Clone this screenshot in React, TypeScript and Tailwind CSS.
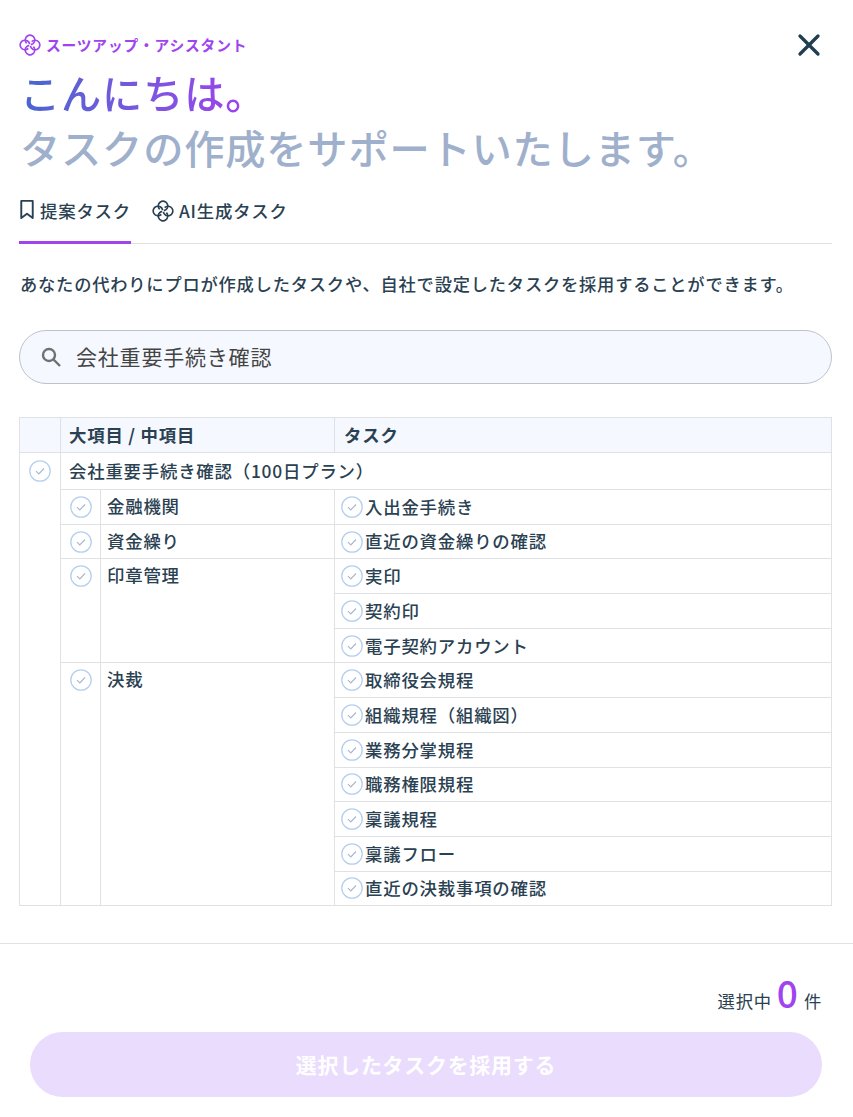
import React from "react";
import { X } from "lucide-react";

const Logo = ({ className }: { className: string }) => (
  <svg viewBox="0 0 24 24" fill="none" stroke="currentColor" strokeWidth="1.8" className={className}>
    {[0, 90, 180, 270].map((deg) => (
      <path key={deg} d="M8.32 10.18A5.2 5.2 0 1 1 12.9 11.62" transform={`rotate(${deg} 12 12)`} />
    ))}
  </svg>
);

const Check = () => (
  <svg viewBox="0 0 22 22" fill="none" className="w-[22px] h-[22px] shrink-0">
    <circle cx="11" cy="11" r="10.2" stroke="#b5d0ee" strokeWidth="1.3" />
    <path d="M7 11.2l2.8 2.7 5.2-5.4" stroke="#a3b7d2" strokeWidth="1.1" />
  </svg>
);

const groups = [
  { name: "金融機関", tasks: ["入出金手続き"] },
  { name: "資金繰り", tasks: ["直近の資金繰りの確認"] },
  { name: "印章管理", tasks: ["実印", "契約印", "電子契約アカウント"] },
  {
    name: "決裁",
    tasks: ["取締役会規程", "組織規程（組織図）", "業務分掌規程", "職務権限規程", "稟議規程", "稟議フロー", "直近の決裁事項の確認"],
  },
];

const cell = "border border-[#dfe1e5] p-0";

export default function App() {
  return (
    <div className="w-[853px] h-[1117px] bg-white text-[#2a4152] font-['Noto_Sans_CJK_JP','Noto_Sans',sans-serif] tracking-[0.05em] overflow-hidden">
      <div className="w-[813px] ml-[19px] pt-[32px]">
        <div className="flex justify-between h-[26px]">
          <div className="flex items-center gap-[5px] h-[26px] text-[#a044f0]">
            <Logo className="w-[22px] h-[22px]" />
            <span className="text-[14.75px] font-bold">スーツアップ・アシスタント</span>
          </div>
          <X className="w-[36px] h-[36px] mr-[5px] -mt-[5px] text-[#1f3f50] shrink-0" strokeWidth={2.2} />
        </div>
        <h1 className="text-[40.25px] leading-[55px] font-medium mt-[6px] pl-[1px] text-[#9fb0cc] whitespace-nowrap">
          <span className="block w-fit bg-gradient-to-r from-[#4566ce] to-[#a23bf0] bg-clip-text text-transparent">こんにちは。</span>
          <span className="block">タスクの作成をサポートいたします。</span>
        </h1>
        <div className="flex border-b border-[#dfe1e5] mt-[14px] h-[56px]">
          <div className="flex items-center gap-[5px] w-[112px] h-[56px] border-b-[3px] border-[#a044f0] pb-[10px]">
            <svg viewBox="0 0 16 22" fill="none" stroke="currentColor" strokeWidth="2" className="w-[16px] h-[21px]">
              <path d="M2 2h12v18l-6-4.5L2 20z" strokeLinejoin="round" />
            </svg>
            <span className="text-[17.4px] leading-[24px] mt-[3px] font-medium whitespace-nowrap">提案タスク</span>
          </div>
          <div className="flex items-center gap-[5px] ml-[21px] h-[56px] pb-[10px]">
            <Logo className="w-[22px] h-[22px]" />
            <span className="text-[17.4px] leading-[24px] font-medium">AI生成タスク</span>
          </div>
        </div>
        <p className="text-[17.25px] leading-[24px] mt-[28px] pl-[1px] font-medium whitespace-nowrap">
          あなたの代わりにプロが作成したタスクや、自社で設定したタスクを採用することができます。
        </p>
        <div className="flex items-center h-[54px] mt-[34px] rounded-full border border-[#bcc3cf] bg-[#f5f8fe] pl-[19px] gap-[13px]">
          <svg viewBox="0 0 24 24" fill="none" stroke="#707070" strokeWidth="2.4" className="w-[24px] h-[24px]">
            <circle cx="10" cy="10" r="6" />
            <path d="M14.5 14.5L21 21" />
          </svg>
          <span className="text-[21px] text-[#444]">会社重要手続き確認</span>
        </div>
        <table className="w-full mt-[33px] border-collapse table-fixed text-[17.4px]">
          <colgroup>
            <col className="w-[41px]" />
            <col className="w-[40px]" />
            <col className="w-[234px]" />
            <col />
          </colgroup>
          <thead>
            <tr className="h-[35px] bg-[#f5f8fe] font-bold">
              <th className={cell} />
              <th colSpan={2} className={`${cell} align-middle text-left pl-[8px] font-bold`}>大項目 / 中項目</th>
              <th className={`${cell} align-middle text-left pl-[9px] font-bold`}>タスク</th>
            </tr>
          </thead>
          <tbody className="font-medium">
            <tr>
              <td rowSpan={14} className={`${cell} align-top`}>
                <div className="flex justify-center pt-[7px]"><Check /></div>
              </td>
              <td colSpan={3} className={`${cell} align-top pl-[8px] leading-[36px]`}>会社重要手続き確認（100日プラン）</td>
            </tr>
            {groups.map((g) =>
              g.tasks.map((t, i) => (
                <tr key={t}>
                  {i === 0 && (
                    <>
                      <td rowSpan={g.tasks.length} className={`${cell} align-top`}>
                        <div className="flex justify-center pt-[6px]"><Check /></div>
                      </td>
                      <td rowSpan={g.tasks.length} className={`${cell} align-top pl-[6px] leading-[31px]`}>{g.name}</td>
                    </>
                  )}
                  <td className={`${cell} align-middle pl-[6px]`}>
                    <div className="flex items-center gap-[2px] h-[33.7px] whitespace-nowrap"><Check />{t}</div>
                  </td>
                </tr>
              ))
            )}
          </tbody>
        </table>
      </div>
      <div className="border-t border-[#dfe1e5] mt-[37px] px-[30px]">
        <div className="flex justify-end items-baseline gap-[5px] mt-[25px] mr-[1px] h-[48px] text-[17.3px]">
          <span>選択中</span>
          <span className="text-[37px] leading-[46px] font-medium tracking-normal text-[#a044f0]">0</span>
          <span className="ml-[1px]">件</span>
        </div>
        <button className="block w-[792px] h-[65px] rounded-full bg-[#eadcfd] text-white text-[20.9px] font-bold mt-[15px]">選択したタスクを採用する</button>
      </div>
    </div>
  );
}
